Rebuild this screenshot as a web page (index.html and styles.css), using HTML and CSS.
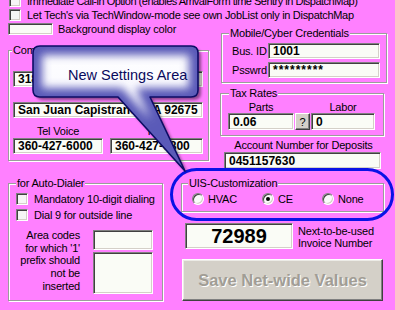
FILE: index.html
```html
<!DOCTYPE html>
<html>
<head>
<meta charset="utf-8">
<link rel="stylesheet" href="styles.css">
</head>
<body>
<div class="page">
  <div class="toprows">
    <div class="row r1"><span class="cb"></span><span>Immediate Call-in Option (enables ArrivalForm time Sentry in DispatchMap)</span></div>
    <div class="row"><span class="cb"></span><span>Let Tech's via TechWindow-mode see own JobList only in DispatchMap</span></div>
  </div>

  <div class="middle">
    <div class="col-left">
      <div class="colorrow"><span class="field colorbox"></span><span>Background display color</span></div>
      <fieldset class="group company">
        <legend>Company Details</legend>
        <div class="gbody">
          <div class="field addr1">31831 Camino Capistrano</div>
          <div class="field addr2">San Juan Capistrano, CA 92675</div>
          <div class="phones labels"><span>Tel Voice</span><span>Fax</span></div>
          <div class="phones"><div class="field ph">360-427-6000</div><div class="field ph">360-427-6800</div></div>
        </div>
      </fieldset>
    </div>

    <div class="col-right">
      <fieldset class="group mobile">
        <legend>Mobile/Cyber Credentials</legend>
        <div class="gbody cred">
          <span>Bus. ID</span><div class="field credf">1001</div>
          <span>Psswrd</span><div class="field credf pw">*********</div>
        </div>
      </fieldset>
      <fieldset class="group tax">
        <legend>Tax Rates</legend>
        <div class="gbody taxgrid">
          <span class="tl">Parts</span><span></span><span class="tl">Labor</span>
          <div class="field taxf">0.06</div><div class="qbtn">?</div><div class="field taxf">0</div>
        </div>
      </fieldset>
      <div class="acclabel">Account Number for Deposits</div>
      <div class="field accf">0451157630</div>
    </div>
  </div>

  <div class="bottom">
    <fieldset class="group auto">
      <legend>for Auto-Dialer</legend>
      <div class="gbody">
        <div class="crow"><span class="cb"></span><span>Mandatory 10-digit dialing</span></div>
        <div class="crow"><span class="cb"></span><span>Dial 9 for outside line</span></div>
        <div class="areas">
          <div class="areatext">Area codes<br>for which '1'<br>prefix should<br>not be<br>inserted</div>
          <div class="areaboxes"><div class="field ab1"></div><div class="field ab2"></div></div>
        </div>
      </div>
    </fieldset>

    <div class="col-br">
      <fieldset class="group uis">
        <legend>UIS-Customization</legend>
        <div class="gbody radios">
          <label class="opt o1"><span class="rb"></span>HVAC</label>
          <label class="opt o2"><span class="rb on"></span>CE</label>
          <label class="opt"><span class="rb"></span>None</label>
        </div>
      </fieldset>
      <div class="invrow">
        <div class="field invf">72989</div>
        <div class="invlabel">Next-to-be-used<br>Invoice Number</div>
      </div>
      <div class="savebtn">Save Net-wide Values</div>
    </div>
  </div>

  <div class="ring"></div>

  <svg class="callout" width="395" height="310" viewBox="0 0 395 310">
    <defs>
      <clipPath id="cp">
        <path d="M40,46 H191 Q198,46 198,53 V90 Q198,97 191,97 H150 L185,171 L118,97 H40 Q33,97 33,90 V53 Q33,46 40,46 Z"/>
      </clipPath>
      <filter id="blur4" x="-20%" y="-20%" width="140%" height="140%"><feGaussianBlur stdDeviation="4"/></filter>
      <filter id="blur2" x="-20%" y="-20%" width="140%" height="140%"><feGaussianBlur stdDeviation="1.8"/></filter>
      <linearGradient id="pg" x1="0" y1="0" x2="0" y2="1">
        <stop offset="0" stop-color="#ffffff"/>
        <stop offset="1" stop-color="#f0f0ff"/>
      </linearGradient>
    </defs>
    <path transform="translate(3,3)" fill="#000" opacity="0.45" filter="url(#blur2)" d="M40,46 H191 Q198,46 198,53 V90 Q198,97 191,97 H150 L185,171 L118,97 H40 Q33,97 33,90 V53 Q33,46 40,46 Z"/>
    <g clip-path="url(#cp)">
      <path fill="url(#pg)" d="M40,46 H191 Q198,46 198,53 V90 Q198,97 191,97 H150 L185,171 L118,97 H40 Q33,97 33,90 V53 Q33,46 40,46 Z"/>
      <path fill="none" stroke="#5a5ab8" stroke-width="18" filter="url(#blur4)" d="M40,46 H191 Q198,46 198,53 V90 Q198,97 191,97 H150 L185,171 L118,97 H40 Q33,97 33,90 V53 Q33,46 40,46 Z"/>
    </g>
    <path fill="none" stroke="#0c0c66" stroke-width="1.6" stroke-linejoin="round" d="M40,46 H191 Q198,46 198,53 V90 Q198,97 191,97 H150 L185,171 L118,97 H40 Q33,97 33,90 V53 Q33,46 40,46 Z"/>
    <text x="68" y="79.5" class="ctext">New Settings Area</text>
  </svg>
</div>
</body>
</html>
```

FILE: styles.css
```css
* { box-sizing: border-box; }
html, body { margin: 0; padding: 0; }
body { background: #ff80ff; }

.page {
  position: relative;
  width: 395px;
  height: 310px;
  overflow: hidden;
  background: #ff80ff;
  font-family: "Liberation Sans", Arial, sans-serif;
  font-size: 11px;
  letter-spacing: -0.2px;
  color: #000;
}

.toprows { margin-top: -6px; padding-left: 9px; letter-spacing: -0.3px; }
.row { display: flex; align-items: center; height: 14px; gap: 6px; white-space: nowrap; }
.r1 { letter-spacing: -0.5px; }

.cb {
  flex: none;
  width: 12px;
  height: 12px;
  background: #f6f6f6;
  border: 1px solid;
  border-color: #808080 #fff #fff #808080;
  box-shadow: inset 1px 1px 0 #404040, inset -1px -1px 0 #d4d0c8;
}

.field {
  background: #fafcf6;
  border: 1px solid;
  border-color: #808080 #fff #fff #808080;
  box-shadow: inset 1px 1px 0 #404040, inset -1px -1px 0 #d4d0c8;
  font-weight: bold;
  font-size: 12px;
  letter-spacing: 0;
  padding-left: 4px;
  white-space: nowrap;
  overflow: hidden;
  display: flex;
  align-items: center;
}

.middle { display: flex; padding-left: 8px; }
.col-left { width: 201px; flex: none; }
.colorrow { display: flex; align-items: center; gap: 5px; margin-top: 1px; height: 12px; white-space: nowrap; }
.colorbox { width: 45px; height: 12px; flex: none; }

.group {
  margin: 0;
  padding: 0;
  min-width: 0;
  border: 1px solid #9c9c9c;
  box-shadow: inset 1px 1px 0 #fff, 1px 1px 0 #fff;
}
.group > legend {
  padding: 0 1px;
  line-height: 13px;
  background: #ff80ff;
  white-space: nowrap;
}

.company { margin-top: 9px; }
.company > legend { margin-left: 3px; }
.company .gbody { padding: 0 5px 6px 4px; }
.addr1 { margin-top: 14px; height: 16px; }
.addr2 { margin-top: 15px; height: 16px; }
.phones { display: grid; grid-template-columns: 90px 93px; column-gap: 7px; }
.phones.labels { margin-top: 7px; line-height: 12px; text-align: center; }
.ph { height: 16px; margin-top: 1px; }

.col-right { width: 167px; flex: none; margin-left: 11px; }
.mobile { margin: 5px 0 0 1px; }
.mobile > legend { margin-left: 7px; }
.cred {
  display: grid;
  grid-template-columns: 36px 112px;
  row-gap: 3px;
  align-items: center;
  padding: 3px 5px 4px 10px;
}
.credf { height: 16px; }
.pw { letter-spacing: 1px; }

.tax { margin: 4px 3px 0 0; }
.tax > legend { margin-left: 8px; }
.taxgrid {
  display: grid;
  grid-template-columns: 66px 15px 64px;
  column-gap: 1px;
  padding: 1px 7px 5px 7px;
}
.tl { line-height: 12px; text-align: center; }
.taxf { height: 17px; }
.qbtn {
  height: 17px;
  background: #d4d0c8;
  border: 1px solid;
  border-color: #fff #404040 #404040 #fff;
  box-shadow: inset -1px -1px 0 #808080;
  display: flex;
  align-items: center;
  justify-content: center;
  font-size: 11px;
}

.acclabel { margin-top: 3px; line-height: 13px; text-align: center; white-space: nowrap; }
.accf { margin-left: 4px; width: 157px; height: 17px; }

.bottom { display: flex; padding-left: 8px; margin-top: 8px; }
.auto { width: 155px; flex: none; }
.auto > legend { margin-left: 7px; }
.auto .gbody { padding: 1px 8px 4px 7px; }
.crow { display: flex; align-items: center; gap: 6px; height: 16px; white-space: nowrap; }
.areas { display: grid; grid-template-columns: 64px 60px; column-gap: 13px; margin-top: 6px; }
.areatext { text-align: right; line-height: 12.7px; white-space: nowrap; }
.areaboxes { display: flex; flex-direction: column; gap: 2px; padding-top: 1px; }
.ab1 { height: 20px; }
.ab2 { height: 42px; }

.col-br { margin-left: 18px; width: 203px; flex: none; }
.uis > legend { margin-left: 6px; }
.radios { display: flex; align-items: center; height: 14px; padding: 0 0 0 10px; margin: 2px 0 5px; box-sizing: content-box; }
.opt { display: flex; align-items: center; gap: 4px; white-space: nowrap; }
.o1 { width: 70px; }
.o2 { width: 60px; }
.rb {
  flex: none;
  position: relative;
  width: 12px;
  height: 12px;
  border-radius: 50%;
  background: #fbfbfb;
  border: 1px solid;
  border-color: #808080 #fff #fff #808080;
  box-shadow: inset 1px 1px 0 #404040, inset -1px -1px 0 #d4d0c8;
}
.rb.on::after {
  content: "";
  position: absolute;
  left: 3px;
  top: 3px;
  width: 4px;
  height: 4px;
  border-radius: 50%;
  background: #000;
}

.invrow { display: flex; margin-top: 11px; margin-left: 4px; gap: 5px; }
.invf { width: 108px; height: 26px; justify-content: center; padding-left: 0; font-size: 20px; }
.invlabel { margin-top: 2px; line-height: 12px; white-space: nowrap; }

.savebtn {
  margin: 10px 0 0 1px;
  width: 201px;
  height: 42px;
  background: #d4d0c8;
  border: 1px solid;
  border-color: #fff #404040 #404040 #fff;
  box-shadow: inset -1px -1px 0 #808080, inset 1px 1px 0 #ecebe6;
  display: flex;
  align-items: center;
  justify-content: center;
  font-weight: bold;
  font-size: 16.5px;
  letter-spacing: 0;
  color: #a19d95;
  text-shadow: 1px 1px 0 #fff;
}

.ring {
  position: absolute;
  left: 170px;
  top: 168px;
  width: 224px;
  height: 53px;
  border: 3px solid #0a12e6;
  border-radius: 27px;
}

.callout { position: absolute; left: 0; top: 0; pointer-events: none; }
.ctext { font-family: "Liberation Sans", Arial, sans-serif; font-size: 14.5px; fill: #0a0a5c; letter-spacing: 0; }
```
